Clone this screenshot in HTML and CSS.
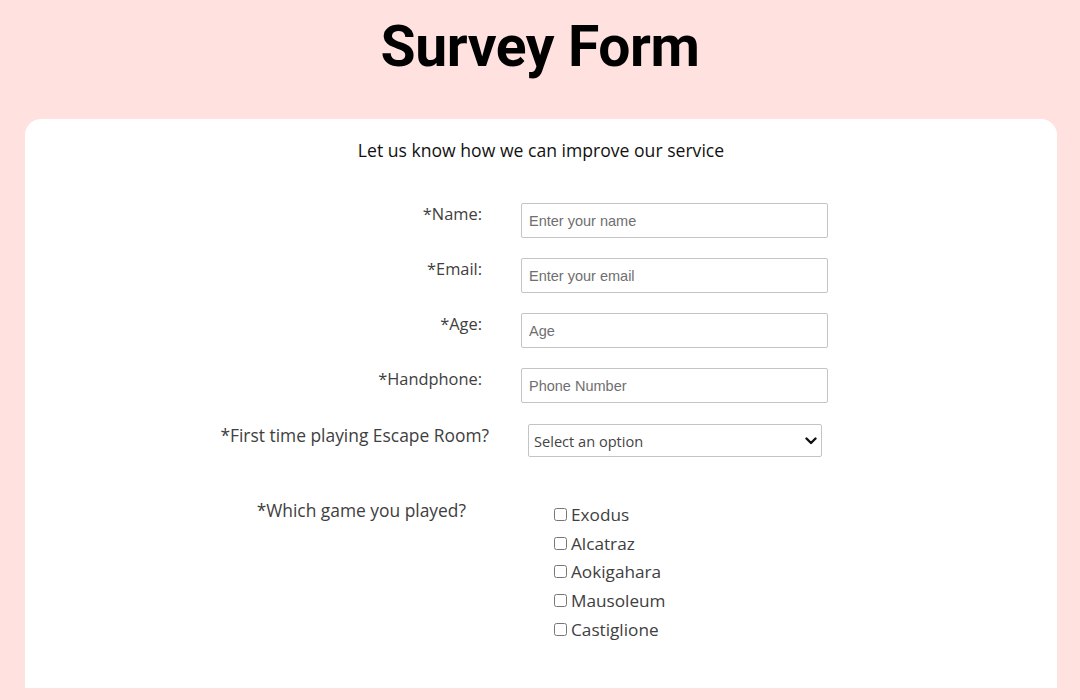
FILE: index.html
```html
<!DOCTYPE html>
<html lang="en">
<head>
<meta charset="utf-8">
<title>Survey Form</title>
<link rel="stylesheet" href="styles.css">
</head>
<body>
<header class="page-head">
  <h1 class="title">Survey Form</h1>
</header>
<main class="card">
  <p class="intro">Let us know how we can improve our service</p>
  <form class="form">
    <div class="row">
      <label class="label" for="name">*Name:</label>
      <input class="field" id="name" type="text" placeholder="Enter your name">
    </div>
    <div class="row">
      <label class="label" for="email">*Email:</label>
      <input class="field" id="email" type="email" placeholder="Enter your email">
    </div>
    <div class="row">
      <label class="label" for="age">*Age:</label>
      <input class="field" id="age" type="text" placeholder="Age">
    </div>
    <div class="row">
      <label class="label" for="phone">*Handphone:</label>
      <input class="field" id="phone" type="text" placeholder="Phone Number">
    </div>
    <div class="row row-select">
      <label class="label label-long" for="first">*First time playing Escape Room?</label>
      <div class="select-wrap">
        <select class="select" id="first">
          <option>Select an option</option>
          <option>Yes</option>
          <option>No</option>
        </select>
        <svg class="chev" width="12" height="8" viewBox="0 0 12 8"><path d="M1.5 1.5 L6 6 L10.5 1.5" fill="none" stroke="#111" stroke-width="2.4" stroke-linecap="round" stroke-linejoin="round"/></svg>
      </div>
    </div>
    <div class="row row-check">
      <span class="label label-long">*Which game you played?</span>
      <div class="checks">
        <label class="check"><input type="checkbox" class="box"><span>Exodus</span></label>
        <label class="check"><input type="checkbox" class="box"><span>Alcatraz</span></label>
        <label class="check"><input type="checkbox" class="box"><span>Aokigahara</span></label>
        <label class="check"><input type="checkbox" class="box"><span>Mausoleum</span></label>
        <label class="check"><input type="checkbox" class="box"><span>Castiglione</span></label>
      </div>
    </div>
  </form>
</main>
</body>
</html>
```

FILE: styles.css
```css
html, body {
  margin: 0;
  padding: 0;
}
body {
  background: #ffe2df;
  font-family: "Open Sans", "Noto Sans", sans-serif;
  color: #333;
  height: 700px;
  overflow: hidden;
}
.page-head {
  height: 119px;
  display: flex;
  justify-content: center;
}
.title {
  margin: 14px 0 0;
  font-family: Roboto, "Liberation Sans", sans-serif;
  font-weight: 700;
  font-size: 57px;
  line-height: 66px;
  color: #000;
  letter-spacing: -0.4px;
}
.card {
  margin: 0 23px 0 25px;
  height: 569px;
  background: #fff;
  border-radius: 16px 16px 0 0;
  padding-top: 18px;
  box-sizing: border-box;
}
.intro {
  margin: 0;
  text-align: center;
  font-size: 17.6px;
  line-height: 26px;
  color: #111;
}
.form {
  margin-top: 40px;
  display: flex;
  flex-direction: column;
  gap: 20px;
}
.row {
  display: grid;
  grid-template-columns: 457px 307px;
  column-gap: 39px;
  align-items: start;
}
.label {
  text-align: right;
  font-size: 16.4px;
  line-height: 22px;
  color: #404040;
}
.label-long {
  font-size: 17.4px;
}
.field {
  box-sizing: border-box;
  width: 307px;
  height: 35px;
  margin: 0;
  border: 1px solid #c4c4c4;
  border-radius: 2px;
  padding: 0 7px;
  font-family: "Liberation Sans", Arial, sans-serif;
  font-size: 14.5px;
  color: #333;
  background: #fff;
}
.field::placeholder {
  color: #6f6f6f;
}
.row-select {
  grid-template-columns: 464px 294px;
  margin-top: 1px;
}
.select-wrap {
  position: relative;
  width: 294px;
  height: 33px;
}
.select {
  appearance: none;
  -webkit-appearance: none;
  box-sizing: border-box;
  width: 294px;
  height: 33px;
  margin: 0;
  border: 1px solid #c4c4c4;
  border-radius: 2px;
  padding: 0 5px;
  font-family: "Open Sans", "Noto Sans", sans-serif;
  font-size: 14.6px;
  color: #444;
  background: #fff;
}
.chev {
  position: absolute;
  right: 5px;
  top: 13px;
}
.row-check {
  grid-template-columns: 441px 200px;
  column-gap: 88px;
  margin-top: 12px;
}
.row-check .label {
  margin-top: 10px;
}
.checks {
  display: flex;
  flex-direction: column;
  padding-top: 11px;
}
.check {
  display: flex;
  align-items: center;
  height: 28.75px;
  font-size: 17.2px;
  color: #404040;
}
.box {
  width: 13px;
  height: 13px;
  margin: 0 4px 0 0;
}
```
